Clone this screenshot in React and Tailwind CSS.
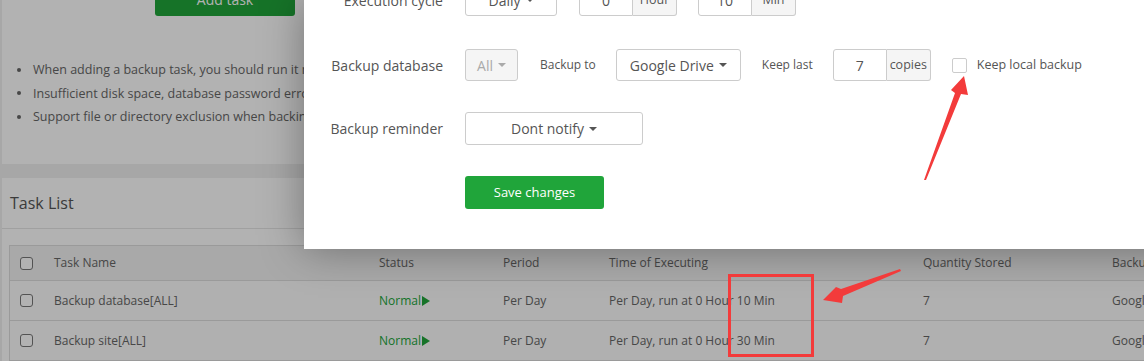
import React from 'react';

const Caret = ({ color = '#555' }) => (
    <span className="inline-block ml-[5px] w-0 h-0 border-x-[4px] border-x-transparent border-t-[4px]" style={{ borderTopColor: color }}></span>
);

const Select = ({ children, className = '', disabled = false }) => (
    <div className={`h-[32px] flex items-center justify-center border border-[#ccc] rounded-[3px] text-[14px] ${disabled ? 'bg-[#f5f5f5] text-[#aaa]' : 'bg-white text-[#555]'} ${className}`}>
        {children}
        <Caret color={disabled ? '#aaa' : '#555'} />
    </div>
);

const InputGroup = ({ value, unit, className = '' }) => (
    <div className={`flex h-[32px] ${className}`}>
        <div className="w-[54px] flex items-center justify-center border border-[#ccc] rounded-l-[3px] text-[14px] text-[#555] bg-white">{value}</div>
        <div className="w-[44px] flex items-center justify-center border border-l-0 border-[#ccc] rounded-r-[3px] bg-[#f5f5f5] text-[12.5px] text-[#555]">{unit}</div>
    </div>
);

const Label = ({ children }) => (
    <div className="w-[139px] mr-[22px] text-right text-[14px] text-[#555] shrink-0">{children}</div>
);

const Check = () => <div className="w-[13px] h-[13px] border border-[#777] rounded-[3px] bg-white"></div>;

const cols = 'grid grid-cols-[34px_325px_124px_106px_314px_189px_200px]';

const tasks = [
    { name: 'Backup database[ALL]', time: 'Per Day, run at 0 Hour 10 Min' },
    { name: 'Backup site[ALL]', time: 'Per Day, run at 0 Hour 30 Min' },
];

const App = () => {
    return (
        <div className="relative w-[1144px] h-[361px] overflow-hidden bg-[#f0f0f0] font-['Open_Sans',sans-serif]">
            {/* page behind the dialog */}
            <div className="pl-[2px] flex flex-col">
                <div className="bg-white h-[164px] flex flex-col">
                    <div className="self-start ml-[153px] -mt-[18px] w-[140px] h-[34px] shrink-0 bg-[#20a53a] rounded-[3px] text-white text-[14px] flex items-center justify-center">Add task</div>
                    <ul className="mt-[42px] text-[12.5px] text-[#666] leading-[23.5px]">
                        <li className="flex items-center whitespace-nowrap"><span className="ml-[15px] mr-[12px] w-[4px] h-[4px] rounded-full bg-[#666]"></span>When adding a backup task, you should run it manually once and check that the backup is complete</li>
                        <li className="flex items-center whitespace-nowrap"><span className="ml-[15px] mr-[12px] w-[4px] h-[4px] rounded-full bg-[#666]"></span>Insufficient disk space, database password error, network jitter may cause backup failure</li>
                        <li className="flex items-center whitespace-nowrap"><span className="ml-[15px] mr-[12px] w-[4px] h-[4px] rounded-full bg-[#666]"></span>Support file or directory exclusion when backing up site</li>
                    </ul>
                </div>
                <div className="bg-white mt-[14px] h-[300px]">
                    <div className="h-[51px] flex items-center pl-[8px] border-b border-[#e6e6e6] text-[16px] text-[#555]">Task List</div>
                    <div className="pl-[7px] pt-[16px]">
                        <div className="w-[1300px] border-t border-l border-[#ddd] text-[12px] text-[#666]">
                            <div className={`${cols} h-[35px] bg-[#f2f2f2] border-b border-[#ddd] items-center`}>
                                <div className="pl-[10px]"><Check /></div>
                                <div className="pl-[10px]">Task Name</div>
                                <div className="pl-[10px]">Status</div>
                                <div className="pl-[10px]">Period</div>
                                <div className="pl-[10px]">Time of Executing</div>
                                <div className="pl-[10px]">Quantity Stored</div>
                                <div className="pl-[10px]">Backup to</div>
                            </div>
                            {tasks.map((t) => (
                                <div key={t.name} className={`${cols} h-[40px] bg-[#fcfcfc] border-b border-[#ddd] items-center`}>
                                    <div className="pl-[10px]"><Check /></div>
                                    <div className="pl-[10px]">{t.name}</div>
                                    <div className="pl-[10px] flex items-center text-[#20a53a]">
                                        Normal
                                        <span className="ml-[1px] w-0 h-0 border-y-[5px] border-y-transparent border-l-[8px] border-l-[#20a53a]"></span>
                                    </div>
                                    <div className="pl-[10px]">Per Day</div>
                                    <div className="pl-[10px]">{t.time}</div>
                                    <div className="pl-[10px]">7</div>
                                    <div className="pl-[10px]">Google Drive</div>
                                </div>
                            ))}
                        </div>
                    </div>
                </div>
            </div>

            {/* dim overlay */}
            <div className="absolute inset-0 bg-black/30"></div>

            {/* dialog */}
            <div className="absolute left-[304px] top-0 w-[900px] h-[249px] bg-white shadow-[0_0_40px_rgba(0,0,0,0.35)] overflow-hidden">
                <div className="flex flex-col -mt-[16px]">
                    <div className="flex items-center h-[32px]">
                        <Label>Execution cycle</Label>
                        <Select className="w-[92px]">Daily</Select>
                        <InputGroup value="0" unit="Hour" className="ml-[22px]" />
                        <InputGroup value="10" unit="Min" className="ml-[21px]" />
                    </div>
                    <div className="flex items-center h-[32px] mt-[33px]">
                        <Label>Backup database</Label>
                        <Select disabled className="w-[53px]">All</Select>
                        <div className="ml-[22px] text-[12px] text-[#555]">Backup to</div>
                        <Select className="ml-[20px] w-[125px]">Google Drive</Select>
                        <div className="ml-[21px] text-[12px] text-[#555]">Keep last</div>
                        <InputGroup value="7" unit="copies" className="ml-[20px]" />
                        <div className="ml-[21px] w-[15px] h-[15px] border border-[#ccc] rounded-[2px]"></div>
                        <div className="ml-[10px] text-[12.5px] text-[#555] mt-[1px]">Keep local backup</div>
                    </div>
                    <div className="flex items-center h-[33px] mt-[31px]">
                        <Label>Backup reminder</Label>
                        <Select className="w-[178px] h-[33px]">Dont notify</Select>
                    </div>
                    <div className="flex mt-[31px]">
                        <div className="w-[161px] shrink-0"></div>
                        <button className="w-[139px] h-[33px] bg-[#20a53a] rounded-[3px] text-white text-[13px] font-medium">Save changes</button>
                    </div>
                </div>
            </div>

            {/* annotations */}
            <svg className="absolute inset-0 pointer-events-none" width="1144" height="361" viewBox="0 0 1144 361">
                <polygon points="924,180 955,93 951,90 964,76 968,95 961,94 926,180" fill="#f33b3b" />
                <polygon points="900,269 841,289 836,287 823,300 842,303 843,296 901,271" fill="#f33b3b" />
                <rect x="729.5" y="275.5" width="83" height="80" fill="none" stroke="#f33b3b" strokeWidth="3" />
            </svg>
        </div>
    );
};

export default App;
